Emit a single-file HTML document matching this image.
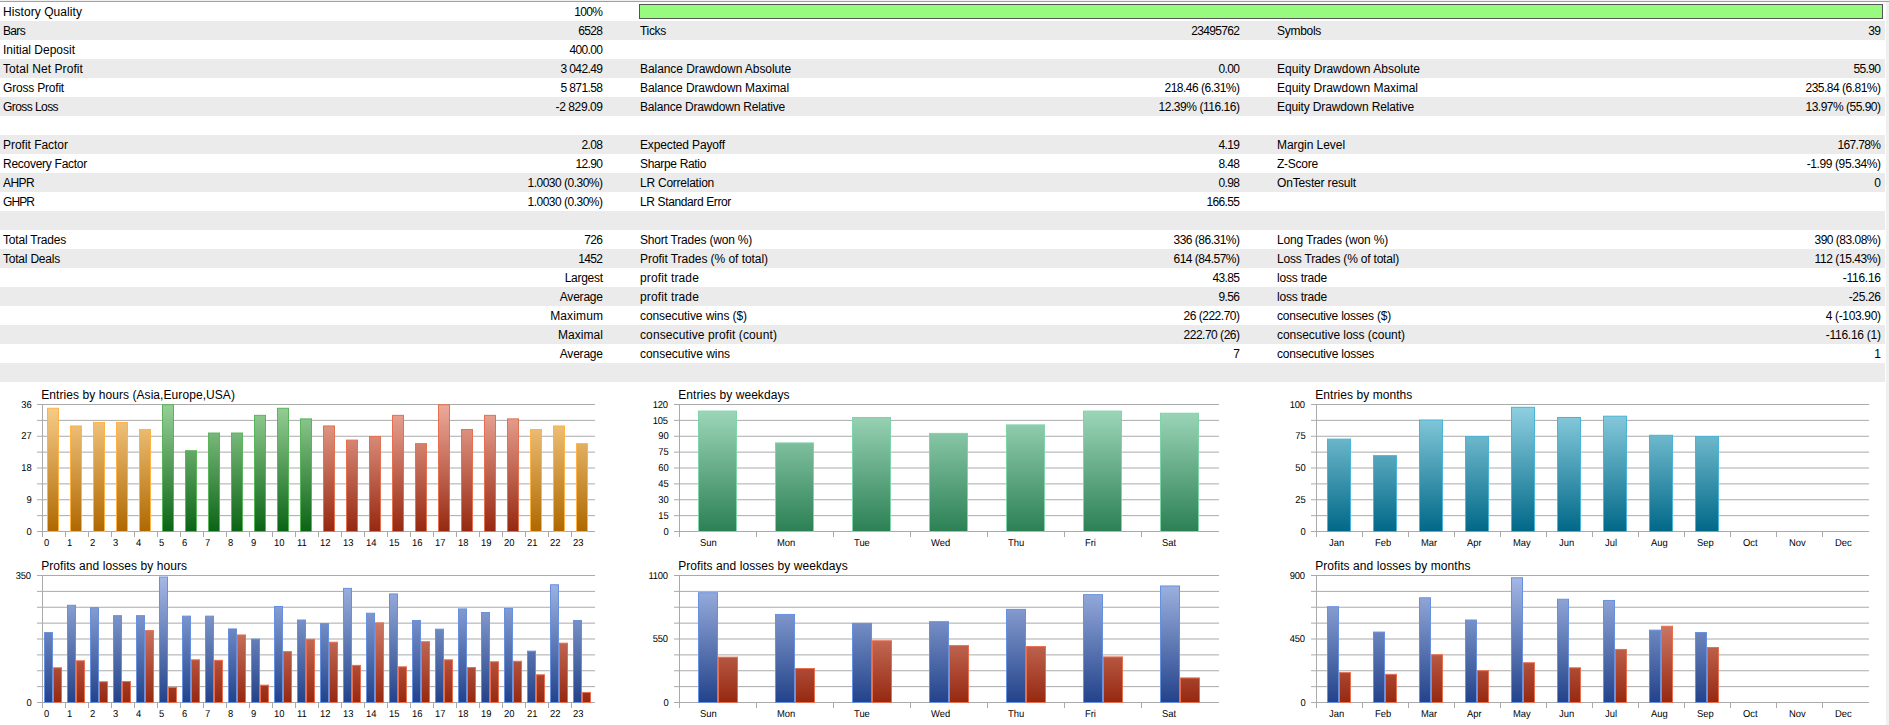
<!DOCTYPE html>
<html lang="en"><head><meta charset="utf-8"><title>Strategy Tester Report</title>
<style>
html,body{margin:0;padding:0;background:#fff;}
body{width:1889px;height:725px;position:relative;overflow:hidden;font-family:"Liberation Sans",Arial,sans-serif;font-size:12px;color:#000;}
.r{position:absolute;left:0;width:1885px;height:19px;line-height:19px;white-space:nowrap;}
.g{background:#ebebeb;}
.r span{position:absolute;top:1px;height:19px;}
.l1{left:3px;}
.v1{right:1282px;text-align:right;}
.l2{left:640px;}
.v2{right:645px;text-align:right;}
.l3{left:1277px;}
.v3{right:4px;text-align:right;}
svg{position:absolute;left:0;top:0;}
svg text{font-family:"Liberation Sans",Arial,sans-serif;fill:#000;}
.t{font-size:12px;letter-spacing:0.07px;}
.a{font-size:10px;text-rendering:geometricPrecision;}
</style></head><body>
<div style="position:absolute;left:0;top:0;width:1889px;height:1px;background:#f0f0f0"></div>
<div style="position:absolute;left:0;top:1px;width:1889px;height:1px;background:#a0a0a0"></div>
<div style="position:absolute;left:1886px;top:2px;width:3px;height:723px;background:#f0f0f0"></div>
<div class="r" style="top:2px">
<span class="l1" style="letter-spacing:0.065px;">History Quality</span>
<span class="v1" style="letter-spacing:-0.676px;margin-right:0.676px;">100%</span>
<span style="left:639px;top:2px;width:1242px;height:13px;border:1px solid #555;background:#98fb80"></span>
</div>
<div class="r g" style="top:21px">
<span class="l1" style="letter-spacing:-0.672px;">Bars</span>
<span class="v1" style="letter-spacing:-0.676px;margin-right:0.676px;">6528</span>
<span class="l2" style="letter-spacing:-0.312px;">Ticks</span>
<span class="v2" style="letter-spacing:-0.674px;margin-right:0.674px;">23495762</span>
<span class="l3" style="letter-spacing:-0.288px;">Symbols</span>
<span class="v3" style="letter-spacing:-0.680px;margin-right:0.680px;">39</span>
</div>
<div class="r" style="top:40px">
<span class="l1" style="letter-spacing:-0.003px;">Initial Deposit</span>
<span class="v1" style="letter-spacing:-0.617px;margin-right:0.617px;">400.00</span>
</div>
<div class="r g" style="top:59px">
<span class="l1" style="letter-spacing:0.081px;">Total Net Profit</span>
<span class="v1" style="letter-spacing:-0.590px;margin-right:0.590px;">3 042.49</span>
<span class="l2" style="letter-spacing:-0.071px;">Balance Drawdown Absolute</span>
<span class="v2" style="letter-spacing:-0.590px;margin-right:0.590px;">0.00</span>
<span class="l3" style="letter-spacing:0.010px;">Equity Drawdown Absolute</span>
<span class="v3" style="letter-spacing:-0.606px;margin-right:0.606px;">55.90</span>
</div>
<div class="r" style="top:78px">
<span class="l1" style="letter-spacing:-0.197px;">Gross Profit</span>
<span class="v1" style="letter-spacing:-0.590px;margin-right:0.590px;">5 871.58</span>
<span class="l2" style="letter-spacing:-0.100px;">Balance Drawdown Maximal</span>
<span class="v2" style="letter-spacing:-0.504px;margin-right:0.504px;">218.46 (6.31%)</span>
<span class="l3" style="letter-spacing:-0.017px;">Equity Drawdown Maximal</span>
<span class="v3" style="letter-spacing:-0.504px;margin-right:0.504px;">235.84 (6.81%)</span>
</div>
<div class="r g" style="top:97px">
<span class="l1" style="letter-spacing:-0.569px;">Gross Loss</span>
<span class="v1" style="letter-spacing:-0.413px;margin-right:0.413px;">-2 829.09</span>
<span class="l2" style="letter-spacing:-0.203px;">Balance Drawdown Relative</span>
<span class="v2" style="letter-spacing:-0.456px;margin-right:0.456px;">12.39% (116.16)</span>
<span class="l3" style="letter-spacing:-0.128px;">Equity Drawdown Relative</span>
<span class="v3" style="letter-spacing:-0.504px;margin-right:0.504px;">13.97% (55.90)</span>
</div>
<div class="r" style="top:116px">
</div>
<div class="r g" style="top:135px">
<span class="l1" style="letter-spacing:-0.028px;">Profit Factor</span>
<span class="v1" style="letter-spacing:-0.590px;margin-right:0.590px;">2.08</span>
<span class="l2" style="letter-spacing:-0.145px;">Expected Payoff</span>
<span class="v2" style="letter-spacing:-0.590px;margin-right:0.590px;">4.19</span>
<span class="l3" style="letter-spacing:-0.059px;">Margin Level</span>
<span class="v3" style="letter-spacing:-0.625px;margin-right:0.625px;">167.78%</span>
</div>
<div class="r" style="top:154px">
<span class="l1" style="letter-spacing:-0.269px;">Recovery Factor</span>
<span class="v1" style="letter-spacing:-0.606px;margin-right:0.606px;">12.90</span>
<span class="l2" style="letter-spacing:-0.337px;">Sharpe Ratio</span>
<span class="v2" style="letter-spacing:-0.590px;margin-right:0.590px;">8.48</span>
<span class="l3" style="letter-spacing:-0.241px;">Z-Score</span>
<span class="v3" style="letter-spacing:-0.385px;margin-right:0.385px;">-1.99 (95.34%)</span>
</div>
<div class="r g" style="top:173px">
<span class="l1" style="letter-spacing:-0.586px;">AHPR</span>
<span class="v1" style="letter-spacing:-0.504px;margin-right:0.504px;">1.0030 (0.30%)</span>
<span class="l2" style="letter-spacing:-0.241px;">LR Correlation</span>
<span class="v2" style="letter-spacing:-0.590px;margin-right:0.590px;">0.98</span>
<span class="l3" style="letter-spacing:-0.158px;">OnTester result</span>
<span class="v3" style="letter-spacing:-0.688px;margin-right:0.688px;">0</span>
</div>
<div class="r" style="top:192px">
<span class="l1" style="letter-spacing:-0.918px;">GHPR</span>
<span class="v1" style="letter-spacing:-0.504px;margin-right:0.504px;">1.0030 (0.30%)</span>
<span class="l2" style="letter-spacing:-0.376px;">LR Standard Error</span>
<span class="v2" style="letter-spacing:-0.617px;margin-right:0.617px;">166.55</span>
</div>
<div class="r g" style="top:211px">
</div>
<div class="r" style="top:230px">
<span class="l1" style="letter-spacing:-0.198px;">Total Trades</span>
<span class="v1" style="letter-spacing:-0.677px;margin-right:0.677px;">726</span>
<span class="l2" style="letter-spacing:-0.202px;">Short Trades (won %)</span>
<span class="v2" style="letter-spacing:-0.504px;margin-right:0.504px;">336 (86.31%)</span>
<span class="l3" style="letter-spacing:-0.161px;">Long Trades (won %)</span>
<span class="v3" style="letter-spacing:-0.504px;margin-right:0.504px;">390 (83.08%)</span>
</div>
<div class="r g" style="top:249px">
<span class="l1" style="letter-spacing:-0.216px;">Total Deals</span>
<span class="v1" style="letter-spacing:-0.676px;margin-right:0.676px;">1452</span>
<span class="l2" style="letter-spacing:-0.053px;">Profit Trades (% of total)</span>
<span class="v2" style="letter-spacing:-0.504px;margin-right:0.504px;">614 (84.57%)</span>
<span class="l3" style="letter-spacing:-0.197px;">Loss Trades (% of total)</span>
<span class="v3" style="letter-spacing:-0.430px;margin-right:0.430px;">112 (15.43%)</span>
</div>
<div class="r" style="top:268px">
<span class="v1" style="letter-spacing:-0.290px;margin-right:0.290px;">Largest</span>
<span class="l2" style="letter-spacing:0.135px;">profit trade</span>
<span class="v2" style="letter-spacing:-0.606px;margin-right:0.606px;">43.85</span>
<span class="l3" style="letter-spacing:-0.203px;">loss trade</span>
<span class="v3" style="letter-spacing:-0.259px;margin-right:0.259px;">-116.16</span>
</div>
<div class="r g" style="top:287px">
<span class="v1" style="letter-spacing:-0.212px;margin-right:0.212px;">Average</span>
<span class="l2" style="letter-spacing:0.135px;">profit trade</span>
<span class="v2" style="letter-spacing:-0.590px;margin-right:0.590px;">9.56</span>
<span class="l3" style="letter-spacing:-0.203px;">loss trade</span>
<span class="v3" style="letter-spacing:-0.339px;margin-right:0.339px;">-25.26</span>
</div>
<div class="r" style="top:306px">
<span class="v1" style="letter-spacing:0.141px;margin-right:-0.141px;">Maximum</span>
<span class="l2" style="letter-spacing:-0.086px;">consecutive wins ($)</span>
<span class="v2" style="letter-spacing:-0.490px;margin-right:0.490px;">26 (222.70)</span>
<span class="l3" style="letter-spacing:-0.214px;">consecutive losses ($)</span>
<span class="v3" style="letter-spacing:-0.337px;margin-right:0.337px;">4 (-103.90)</span>
</div>
<div class="r g" style="top:325px">
<span class="v1" style="letter-spacing:0.047px;margin-right:-0.047px;">Maximal</span>
<span class="l2" style="letter-spacing:0.113px;">consecutive profit (count)</span>
<span class="v2" style="letter-spacing:-0.490px;margin-right:0.490px;">222.70 (26)</span>
<span class="l3" style="letter-spacing:-0.031px;">consecutive loss (count)</span>
<span class="v3" style="letter-spacing:-0.256px;margin-right:0.256px;">-116.16 (1)</span>
</div>
<div class="r" style="top:344px">
<span class="v1" style="letter-spacing:-0.212px;margin-right:0.212px;">Average</span>
<span class="l2" style="letter-spacing:-0.045px;">consecutive wins</span>
<span class="v2" style="letter-spacing:-0.688px;margin-right:0.688px;">7</span>
<span class="l3" style="letter-spacing:-0.207px;">consecutive losses</span>
<span class="v3" style="letter-spacing:-0.688px;margin-right:0.688px;">1</span>
</div>
<div class="r g" style="top:363px">
</div>
<svg width="1889" height="725" viewBox="0 0 1889 725">
<defs>
<linearGradient id="or" gradientUnits="userSpaceOnUse" x1="0" y1="404.5" x2="0" y2="531.5"><stop offset="0" stop-color="#f8cf8c"/><stop offset="1" stop-color="#b06800"/></linearGradient>
<linearGradient id="gr" gradientUnits="userSpaceOnUse" x1="0" y1="404.5" x2="0" y2="531.5"><stop offset="0" stop-color="#98d098"/><stop offset="1" stop-color="#0a6414"/></linearGradient>
<linearGradient id="rd" gradientUnits="userSpaceOnUse" x1="0" y1="404.5" x2="0" y2="531.5"><stop offset="0" stop-color="#eeaa9a"/><stop offset="1" stop-color="#962810"/></linearGradient>
<linearGradient id="lg" gradientUnits="userSpaceOnUse" x1="0" y1="404.5" x2="0" y2="531.5"><stop offset="0" stop-color="#a2dabe"/><stop offset="1" stop-color="#2c8054"/></linearGradient>
<linearGradient id="tl" gradientUnits="userSpaceOnUse" x1="0" y1="404.5" x2="0" y2="531.5"><stop offset="0" stop-color="#92d2e2"/><stop offset="1" stop-color="#006888"/></linearGradient>
<linearGradient id="bl" gradientUnits="userSpaceOnUse" x1="0" y1="575.5" x2="0" y2="702.5"><stop offset="0" stop-color="#a6bae6"/><stop offset="1" stop-color="#22428a"/></linearGradient>
<linearGradient id="r2" gradientUnits="userSpaceOnUse" x1="0" y1="575.5" x2="0" y2="702.5"><stop offset="0" stop-color="#eeaa9a"/><stop offset="1" stop-color="#962810"/></linearGradient>
</defs>
<line x1="37" y1="404.500" x2="595" y2="404.500" stroke="#aaaaaa" stroke-width="1"/>
<line x1="37" y1="420.375" x2="595" y2="420.375" stroke="#aaaaaa" stroke-width="1"/>
<line x1="37" y1="436.250" x2="595" y2="436.250" stroke="#aaaaaa" stroke-width="1"/>
<line x1="37" y1="452.125" x2="595" y2="452.125" stroke="#aaaaaa" stroke-width="1"/>
<line x1="37" y1="468.000" x2="595" y2="468.000" stroke="#aaaaaa" stroke-width="1"/>
<line x1="37" y1="483.875" x2="595" y2="483.875" stroke="#aaaaaa" stroke-width="1"/>
<line x1="37" y1="499.750" x2="595" y2="499.750" stroke="#aaaaaa" stroke-width="1"/>
<line x1="37" y1="515.625" x2="595" y2="515.625" stroke="#aaaaaa" stroke-width="1"/>
<line x1="37" y1="531.500" x2="595" y2="531.500" stroke="#aaaaaa" stroke-width="1"/>
<line x1="42.5" y1="404.0" x2="42.5" y2="537.0" stroke="#aaaaaa" stroke-width="1"/>
<line x1="65.5" y1="531.5" x2="65.5" y2="537.0" stroke="#aaaaaa" stroke-width="1"/>
<line x1="88.5" y1="531.5" x2="88.5" y2="537.0" stroke="#aaaaaa" stroke-width="1"/>
<line x1="111.5" y1="531.5" x2="111.5" y2="537.0" stroke="#aaaaaa" stroke-width="1"/>
<line x1="134.5" y1="531.5" x2="134.5" y2="537.0" stroke="#aaaaaa" stroke-width="1"/>
<line x1="157.5" y1="531.5" x2="157.5" y2="537.0" stroke="#aaaaaa" stroke-width="1"/>
<line x1="180.5" y1="531.5" x2="180.5" y2="537.0" stroke="#aaaaaa" stroke-width="1"/>
<line x1="203.5" y1="531.5" x2="203.5" y2="537.0" stroke="#aaaaaa" stroke-width="1"/>
<line x1="226.5" y1="531.5" x2="226.5" y2="537.0" stroke="#aaaaaa" stroke-width="1"/>
<line x1="249.5" y1="531.5" x2="249.5" y2="537.0" stroke="#aaaaaa" stroke-width="1"/>
<line x1="272.5" y1="531.5" x2="272.5" y2="537.0" stroke="#aaaaaa" stroke-width="1"/>
<line x1="295.5" y1="531.5" x2="295.5" y2="537.0" stroke="#aaaaaa" stroke-width="1"/>
<line x1="318.5" y1="531.5" x2="318.5" y2="537.0" stroke="#aaaaaa" stroke-width="1"/>
<line x1="341.5" y1="531.5" x2="341.5" y2="537.0" stroke="#aaaaaa" stroke-width="1"/>
<line x1="364.5" y1="531.5" x2="364.5" y2="537.0" stroke="#aaaaaa" stroke-width="1"/>
<line x1="387.5" y1="531.5" x2="387.5" y2="537.0" stroke="#aaaaaa" stroke-width="1"/>
<line x1="410.5" y1="531.5" x2="410.5" y2="537.0" stroke="#aaaaaa" stroke-width="1"/>
<line x1="433.5" y1="531.5" x2="433.5" y2="537.0" stroke="#aaaaaa" stroke-width="1"/>
<line x1="456.5" y1="531.5" x2="456.5" y2="537.0" stroke="#aaaaaa" stroke-width="1"/>
<line x1="479.5" y1="531.5" x2="479.5" y2="537.0" stroke="#aaaaaa" stroke-width="1"/>
<line x1="502.5" y1="531.5" x2="502.5" y2="537.0" stroke="#aaaaaa" stroke-width="1"/>
<line x1="525.5" y1="531.5" x2="525.5" y2="537.0" stroke="#aaaaaa" stroke-width="1"/>
<line x1="548.5" y1="531.5" x2="548.5" y2="537.0" stroke="#aaaaaa" stroke-width="1"/>
<line x1="571.5" y1="531.5" x2="571.5" y2="537.0" stroke="#aaaaaa" stroke-width="1"/>
<text class="t" x="41.2" y="399.0">Entries by hours (Asia,Europe,USA)</text>
<text class="a" transform="translate(31.7,407.70) scale(0.94,1)" text-anchor="end">36</text>
<text class="a" transform="translate(31.7,439.45) scale(0.94,1)" text-anchor="end">27</text>
<text class="a" transform="translate(31.7,471.20) scale(0.94,1)" text-anchor="end">18</text>
<text class="a" transform="translate(31.7,502.95) scale(0.94,1)" text-anchor="end">9</text>
<text class="a" transform="translate(31.7,534.70) scale(0.94,1)" text-anchor="end">0</text>
<text class="a" transform="translate(44,546.0) scale(0.94,1)">0</text>
<text class="a" transform="translate(67,546.0) scale(0.94,1)">1</text>
<text class="a" transform="translate(90,546.0) scale(0.94,1)">2</text>
<text class="a" transform="translate(113,546.0) scale(0.94,1)">3</text>
<text class="a" transform="translate(136,546.0) scale(0.94,1)">4</text>
<text class="a" transform="translate(159,546.0) scale(0.94,1)">5</text>
<text class="a" transform="translate(182,546.0) scale(0.94,1)">6</text>
<text class="a" transform="translate(205,546.0) scale(0.94,1)">7</text>
<text class="a" transform="translate(228,546.0) scale(0.94,1)">8</text>
<text class="a" transform="translate(251,546.0) scale(0.94,1)">9</text>
<text class="a" transform="translate(274,546.0) scale(0.94,1)">10</text>
<text class="a" transform="translate(297,546.0) scale(0.94,1)">11</text>
<text class="a" transform="translate(320,546.0) scale(0.94,1)">12</text>
<text class="a" transform="translate(343,546.0) scale(0.94,1)">13</text>
<text class="a" transform="translate(366,546.0) scale(0.94,1)">14</text>
<text class="a" transform="translate(389,546.0) scale(0.94,1)">15</text>
<text class="a" transform="translate(412,546.0) scale(0.94,1)">16</text>
<text class="a" transform="translate(435,546.0) scale(0.94,1)">17</text>
<text class="a" transform="translate(458,546.0) scale(0.94,1)">18</text>
<text class="a" transform="translate(481,546.0) scale(0.94,1)">19</text>
<text class="a" transform="translate(504,546.0) scale(0.94,1)">20</text>
<text class="a" transform="translate(527,546.0) scale(0.94,1)">21</text>
<text class="a" transform="translate(550,546.0) scale(0.94,1)">22</text>
<text class="a" transform="translate(573,546.0) scale(0.94,1)">23</text>
<rect x="47.5" y="408.28" width="11" height="123.22" fill="url(#or)" stroke="#ffb347" stroke-width="1"/>
<rect x="70.5" y="425.96" width="11" height="105.54" fill="url(#or)" stroke="#ffb347" stroke-width="1"/>
<rect x="93.5" y="422.42" width="11" height="109.08" fill="url(#or)" stroke="#ffb347" stroke-width="1"/>
<rect x="116.5" y="422.42" width="11" height="109.08" fill="url(#or)" stroke="#ffb347" stroke-width="1"/>
<rect x="139.5" y="429.49" width="11" height="102.01" fill="url(#or)" stroke="#ffb347" stroke-width="1"/>
<rect x="162.5" y="404.75" width="11" height="126.75" fill="url(#gr)" stroke="#5ab45a" stroke-width="1"/>
<rect x="185.5" y="450.70" width="11" height="80.80" fill="url(#gr)" stroke="#5ab45a" stroke-width="1"/>
<rect x="208.5" y="433.03" width="11" height="98.47" fill="url(#gr)" stroke="#5ab45a" stroke-width="1"/>
<rect x="231.5" y="433.03" width="11" height="98.47" fill="url(#gr)" stroke="#5ab45a" stroke-width="1"/>
<rect x="254.5" y="415.35" width="11" height="116.15" fill="url(#gr)" stroke="#5ab45a" stroke-width="1"/>
<rect x="277.5" y="408.28" width="11" height="123.22" fill="url(#gr)" stroke="#5ab45a" stroke-width="1"/>
<rect x="300.5" y="418.89" width="11" height="112.61" fill="url(#gr)" stroke="#5ab45a" stroke-width="1"/>
<rect x="323.5" y="425.96" width="11" height="105.54" fill="url(#rd)" stroke="#e47050" stroke-width="1"/>
<rect x="346.5" y="440.10" width="11" height="91.40" fill="url(#rd)" stroke="#e47050" stroke-width="1"/>
<rect x="369.5" y="436.56" width="11" height="94.94" fill="url(#rd)" stroke="#e47050" stroke-width="1"/>
<rect x="392.5" y="415.35" width="11" height="116.15" fill="url(#rd)" stroke="#e47050" stroke-width="1"/>
<rect x="415.5" y="443.63" width="11" height="87.87" fill="url(#rd)" stroke="#e47050" stroke-width="1"/>
<rect x="438.5" y="404.75" width="11" height="126.75" fill="url(#rd)" stroke="#e47050" stroke-width="1"/>
<rect x="461.5" y="429.49" width="11" height="102.01" fill="url(#rd)" stroke="#e47050" stroke-width="1"/>
<rect x="484.5" y="415.35" width="11" height="116.15" fill="url(#rd)" stroke="#e47050" stroke-width="1"/>
<rect x="507.5" y="418.89" width="11" height="112.61" fill="url(#rd)" stroke="#e47050" stroke-width="1"/>
<rect x="530.5" y="429.49" width="11" height="102.01" fill="url(#or)" stroke="#ffb347" stroke-width="1"/>
<rect x="553.5" y="425.96" width="11" height="105.54" fill="url(#or)" stroke="#ffb347" stroke-width="1"/>
<rect x="576.5" y="443.63" width="11" height="87.87" fill="url(#or)" stroke="#ffb347" stroke-width="1"/>
<line x1="674" y1="404.500" x2="1219" y2="404.500" stroke="#aaaaaa" stroke-width="1"/>
<line x1="674" y1="420.375" x2="1219" y2="420.375" stroke="#aaaaaa" stroke-width="1"/>
<line x1="674" y1="436.250" x2="1219" y2="436.250" stroke="#aaaaaa" stroke-width="1"/>
<line x1="674" y1="452.125" x2="1219" y2="452.125" stroke="#aaaaaa" stroke-width="1"/>
<line x1="674" y1="468.000" x2="1219" y2="468.000" stroke="#aaaaaa" stroke-width="1"/>
<line x1="674" y1="483.875" x2="1219" y2="483.875" stroke="#aaaaaa" stroke-width="1"/>
<line x1="674" y1="499.750" x2="1219" y2="499.750" stroke="#aaaaaa" stroke-width="1"/>
<line x1="674" y1="515.625" x2="1219" y2="515.625" stroke="#aaaaaa" stroke-width="1"/>
<line x1="674" y1="531.500" x2="1219" y2="531.500" stroke="#aaaaaa" stroke-width="1"/>
<line x1="679.5" y1="404.0" x2="679.5" y2="537.0" stroke="#aaaaaa" stroke-width="1"/>
<line x1="756.5" y1="531.5" x2="756.5" y2="537.0" stroke="#aaaaaa" stroke-width="1"/>
<line x1="833.5" y1="531.5" x2="833.5" y2="537.0" stroke="#aaaaaa" stroke-width="1"/>
<line x1="910.5" y1="531.5" x2="910.5" y2="537.0" stroke="#aaaaaa" stroke-width="1"/>
<line x1="987.5" y1="531.5" x2="987.5" y2="537.0" stroke="#aaaaaa" stroke-width="1"/>
<line x1="1064.5" y1="531.5" x2="1064.5" y2="537.0" stroke="#aaaaaa" stroke-width="1"/>
<line x1="1141.5" y1="531.5" x2="1141.5" y2="537.0" stroke="#aaaaaa" stroke-width="1"/>
<text class="t" x="678.2" y="399.0">Entries by weekdays</text>
<text class="a" transform="translate(667.7,407.70) scale(0.94,1)" text-anchor="end" style="letter-spacing:-0.25px">120</text>
<text class="a" transform="translate(667.7,423.57) scale(0.94,1)" text-anchor="end" style="letter-spacing:-0.25px">105</text>
<text class="a" transform="translate(668.7,439.45) scale(0.94,1)" text-anchor="end">90</text>
<text class="a" transform="translate(668.7,455.32) scale(0.94,1)" text-anchor="end">75</text>
<text class="a" transform="translate(668.7,471.20) scale(0.94,1)" text-anchor="end">60</text>
<text class="a" transform="translate(668.7,487.07) scale(0.94,1)" text-anchor="end">45</text>
<text class="a" transform="translate(668.7,502.95) scale(0.94,1)" text-anchor="end">30</text>
<text class="a" transform="translate(668.7,518.83) scale(0.94,1)" text-anchor="end">15</text>
<text class="a" transform="translate(668.7,534.70) scale(0.94,1)" text-anchor="end">0</text>
<text class="a" transform="translate(700,546.0) scale(0.94,1)">Sun</text>
<text class="a" transform="translate(777,546.0) scale(0.94,1)">Mon</text>
<text class="a" transform="translate(854,546.0) scale(0.94,1)">Tue</text>
<text class="a" transform="translate(931,546.0) scale(0.94,1)">Wed</text>
<text class="a" transform="translate(1008,546.0) scale(0.94,1)">Thu</text>
<text class="a" transform="translate(1085,546.0) scale(0.94,1)">Fri</text>
<text class="a" transform="translate(1162,546.0) scale(0.94,1)">Sat</text>
<rect x="698.5" y="411.11" width="38" height="120.39" fill="url(#lg)" stroke="#80d4a8" stroke-width="1"/>
<rect x="775.5" y="442.93" width="38" height="88.57" fill="url(#lg)" stroke="#80d4a8" stroke-width="1"/>
<rect x="852.5" y="417.48" width="38" height="114.02" fill="url(#lg)" stroke="#80d4a8" stroke-width="1"/>
<rect x="929.5" y="433.38" width="38" height="98.12" fill="url(#lg)" stroke="#80d4a8" stroke-width="1"/>
<rect x="1006.5" y="424.90" width="38" height="106.60" fill="url(#lg)" stroke="#80d4a8" stroke-width="1"/>
<rect x="1083.5" y="411.11" width="38" height="120.39" fill="url(#lg)" stroke="#80d4a8" stroke-width="1"/>
<rect x="1160.5" y="413.23" width="38" height="118.27" fill="url(#lg)" stroke="#80d4a8" stroke-width="1"/>
<line x1="1311" y1="404.500" x2="1869" y2="404.500" stroke="#aaaaaa" stroke-width="1"/>
<line x1="1311" y1="420.375" x2="1869" y2="420.375" stroke="#aaaaaa" stroke-width="1"/>
<line x1="1311" y1="436.250" x2="1869" y2="436.250" stroke="#aaaaaa" stroke-width="1"/>
<line x1="1311" y1="452.125" x2="1869" y2="452.125" stroke="#aaaaaa" stroke-width="1"/>
<line x1="1311" y1="468.000" x2="1869" y2="468.000" stroke="#aaaaaa" stroke-width="1"/>
<line x1="1311" y1="483.875" x2="1869" y2="483.875" stroke="#aaaaaa" stroke-width="1"/>
<line x1="1311" y1="499.750" x2="1869" y2="499.750" stroke="#aaaaaa" stroke-width="1"/>
<line x1="1311" y1="515.625" x2="1869" y2="515.625" stroke="#aaaaaa" stroke-width="1"/>
<line x1="1311" y1="531.500" x2="1869" y2="531.500" stroke="#aaaaaa" stroke-width="1"/>
<line x1="1316.5" y1="404.0" x2="1316.5" y2="537.0" stroke="#aaaaaa" stroke-width="1"/>
<line x1="1362.5" y1="531.5" x2="1362.5" y2="537.0" stroke="#aaaaaa" stroke-width="1"/>
<line x1="1408.5" y1="531.5" x2="1408.5" y2="537.0" stroke="#aaaaaa" stroke-width="1"/>
<line x1="1454.5" y1="531.5" x2="1454.5" y2="537.0" stroke="#aaaaaa" stroke-width="1"/>
<line x1="1500.5" y1="531.5" x2="1500.5" y2="537.0" stroke="#aaaaaa" stroke-width="1"/>
<line x1="1546.5" y1="531.5" x2="1546.5" y2="537.0" stroke="#aaaaaa" stroke-width="1"/>
<line x1="1592.5" y1="531.5" x2="1592.5" y2="537.0" stroke="#aaaaaa" stroke-width="1"/>
<line x1="1638.5" y1="531.5" x2="1638.5" y2="537.0" stroke="#aaaaaa" stroke-width="1"/>
<line x1="1684.5" y1="531.5" x2="1684.5" y2="537.0" stroke="#aaaaaa" stroke-width="1"/>
<line x1="1730.5" y1="531.5" x2="1730.5" y2="537.0" stroke="#aaaaaa" stroke-width="1"/>
<line x1="1776.5" y1="531.5" x2="1776.5" y2="537.0" stroke="#aaaaaa" stroke-width="1"/>
<line x1="1822.5" y1="531.5" x2="1822.5" y2="537.0" stroke="#aaaaaa" stroke-width="1"/>
<text class="t" x="1315.2" y="399.0">Entries by months</text>
<text class="a" transform="translate(1304.7,407.70) scale(0.94,1)" text-anchor="end" style="letter-spacing:-0.25px">100</text>
<text class="a" transform="translate(1305.7,439.45) scale(0.94,1)" text-anchor="end">75</text>
<text class="a" transform="translate(1305.7,471.20) scale(0.94,1)" text-anchor="end">50</text>
<text class="a" transform="translate(1305.7,502.95) scale(0.94,1)" text-anchor="end">25</text>
<text class="a" transform="translate(1305.7,534.70) scale(0.94,1)" text-anchor="end">0</text>
<text class="a" transform="translate(1329,546.0) scale(0.94,1)">Jan</text>
<text class="a" transform="translate(1375,546.0) scale(0.94,1)">Feb</text>
<text class="a" transform="translate(1421,546.0) scale(0.94,1)">Mar</text>
<text class="a" transform="translate(1467,546.0) scale(0.94,1)">Apr</text>
<text class="a" transform="translate(1513,546.0) scale(0.94,1)">May</text>
<text class="a" transform="translate(1559,546.0) scale(0.94,1)">Jun</text>
<text class="a" transform="translate(1605,546.0) scale(0.94,1)">Jul</text>
<text class="a" transform="translate(1651,546.0) scale(0.94,1)">Aug</text>
<text class="a" transform="translate(1697,546.0) scale(0.94,1)">Sep</text>
<text class="a" transform="translate(1743,546.0) scale(0.94,1)">Oct</text>
<text class="a" transform="translate(1789,546.0) scale(0.94,1)">Nov</text>
<text class="a" transform="translate(1835,546.0) scale(0.94,1)">Dec</text>
<rect x="1327.5" y="439.11" width="23" height="92.39" fill="url(#tl)" stroke="#48b4d8" stroke-width="1"/>
<rect x="1373.5" y="455.65" width="23" height="75.85" fill="url(#tl)" stroke="#48b4d8" stroke-width="1"/>
<rect x="1419.5" y="420.02" width="23" height="111.48" fill="url(#tl)" stroke="#48b4d8" stroke-width="1"/>
<rect x="1465.5" y="436.56" width="23" height="94.94" fill="url(#tl)" stroke="#48b4d8" stroke-width="1"/>
<rect x="1511.5" y="407.30" width="23" height="124.20" fill="url(#tl)" stroke="#48b4d8" stroke-width="1"/>
<rect x="1557.5" y="417.48" width="23" height="114.02" fill="url(#tl)" stroke="#48b4d8" stroke-width="1"/>
<rect x="1603.5" y="416.20" width="23" height="115.30" fill="url(#tl)" stroke="#48b4d8" stroke-width="1"/>
<rect x="1649.5" y="435.29" width="23" height="96.21" fill="url(#tl)" stroke="#48b4d8" stroke-width="1"/>
<rect x="1695.5" y="436.56" width="23" height="94.94" fill="url(#tl)" stroke="#48b4d8" stroke-width="1"/>
<line x1="37" y1="575.500" x2="595" y2="575.500" stroke="#aaaaaa" stroke-width="1"/>
<line x1="37" y1="591.375" x2="595" y2="591.375" stroke="#aaaaaa" stroke-width="1"/>
<line x1="37" y1="607.250" x2="595" y2="607.250" stroke="#aaaaaa" stroke-width="1"/>
<line x1="37" y1="623.125" x2="595" y2="623.125" stroke="#aaaaaa" stroke-width="1"/>
<line x1="37" y1="639.000" x2="595" y2="639.000" stroke="#aaaaaa" stroke-width="1"/>
<line x1="37" y1="654.875" x2="595" y2="654.875" stroke="#aaaaaa" stroke-width="1"/>
<line x1="37" y1="670.750" x2="595" y2="670.750" stroke="#aaaaaa" stroke-width="1"/>
<line x1="37" y1="686.625" x2="595" y2="686.625" stroke="#aaaaaa" stroke-width="1"/>
<line x1="37" y1="702.500" x2="595" y2="702.500" stroke="#aaaaaa" stroke-width="1"/>
<line x1="42.5" y1="575.0" x2="42.5" y2="708.0" stroke="#aaaaaa" stroke-width="1"/>
<line x1="65.5" y1="702.5" x2="65.5" y2="708.0" stroke="#aaaaaa" stroke-width="1"/>
<line x1="88.5" y1="702.5" x2="88.5" y2="708.0" stroke="#aaaaaa" stroke-width="1"/>
<line x1="111.5" y1="702.5" x2="111.5" y2="708.0" stroke="#aaaaaa" stroke-width="1"/>
<line x1="134.5" y1="702.5" x2="134.5" y2="708.0" stroke="#aaaaaa" stroke-width="1"/>
<line x1="157.5" y1="702.5" x2="157.5" y2="708.0" stroke="#aaaaaa" stroke-width="1"/>
<line x1="180.5" y1="702.5" x2="180.5" y2="708.0" stroke="#aaaaaa" stroke-width="1"/>
<line x1="203.5" y1="702.5" x2="203.5" y2="708.0" stroke="#aaaaaa" stroke-width="1"/>
<line x1="226.5" y1="702.5" x2="226.5" y2="708.0" stroke="#aaaaaa" stroke-width="1"/>
<line x1="249.5" y1="702.5" x2="249.5" y2="708.0" stroke="#aaaaaa" stroke-width="1"/>
<line x1="272.5" y1="702.5" x2="272.5" y2="708.0" stroke="#aaaaaa" stroke-width="1"/>
<line x1="295.5" y1="702.5" x2="295.5" y2="708.0" stroke="#aaaaaa" stroke-width="1"/>
<line x1="318.5" y1="702.5" x2="318.5" y2="708.0" stroke="#aaaaaa" stroke-width="1"/>
<line x1="341.5" y1="702.5" x2="341.5" y2="708.0" stroke="#aaaaaa" stroke-width="1"/>
<line x1="364.5" y1="702.5" x2="364.5" y2="708.0" stroke="#aaaaaa" stroke-width="1"/>
<line x1="387.5" y1="702.5" x2="387.5" y2="708.0" stroke="#aaaaaa" stroke-width="1"/>
<line x1="410.5" y1="702.5" x2="410.5" y2="708.0" stroke="#aaaaaa" stroke-width="1"/>
<line x1="433.5" y1="702.5" x2="433.5" y2="708.0" stroke="#aaaaaa" stroke-width="1"/>
<line x1="456.5" y1="702.5" x2="456.5" y2="708.0" stroke="#aaaaaa" stroke-width="1"/>
<line x1="479.5" y1="702.5" x2="479.5" y2="708.0" stroke="#aaaaaa" stroke-width="1"/>
<line x1="502.5" y1="702.5" x2="502.5" y2="708.0" stroke="#aaaaaa" stroke-width="1"/>
<line x1="525.5" y1="702.5" x2="525.5" y2="708.0" stroke="#aaaaaa" stroke-width="1"/>
<line x1="548.5" y1="702.5" x2="548.5" y2="708.0" stroke="#aaaaaa" stroke-width="1"/>
<line x1="571.5" y1="702.5" x2="571.5" y2="708.0" stroke="#aaaaaa" stroke-width="1"/>
<text class="t" x="41.2" y="570.0">Profits and losses by hours</text>
<text class="a" transform="translate(30.7,578.70) scale(0.94,1)" text-anchor="end" style="letter-spacing:-0.25px">350</text>
<text class="a" transform="translate(31.7,705.70) scale(0.94,1)" text-anchor="end">0</text>
<text class="a" transform="translate(44,717.0) scale(0.94,1)">0</text>
<text class="a" transform="translate(67,717.0) scale(0.94,1)">1</text>
<text class="a" transform="translate(90,717.0) scale(0.94,1)">2</text>
<text class="a" transform="translate(113,717.0) scale(0.94,1)">3</text>
<text class="a" transform="translate(136,717.0) scale(0.94,1)">4</text>
<text class="a" transform="translate(159,717.0) scale(0.94,1)">5</text>
<text class="a" transform="translate(182,717.0) scale(0.94,1)">6</text>
<text class="a" transform="translate(205,717.0) scale(0.94,1)">7</text>
<text class="a" transform="translate(228,717.0) scale(0.94,1)">8</text>
<text class="a" transform="translate(251,717.0) scale(0.94,1)">9</text>
<text class="a" transform="translate(274,717.0) scale(0.94,1)">10</text>
<text class="a" transform="translate(297,717.0) scale(0.94,1)">11</text>
<text class="a" transform="translate(320,717.0) scale(0.94,1)">12</text>
<text class="a" transform="translate(343,717.0) scale(0.94,1)">13</text>
<text class="a" transform="translate(366,717.0) scale(0.94,1)">14</text>
<text class="a" transform="translate(389,717.0) scale(0.94,1)">15</text>
<text class="a" transform="translate(412,717.0) scale(0.94,1)">16</text>
<text class="a" transform="translate(435,717.0) scale(0.94,1)">17</text>
<text class="a" transform="translate(458,717.0) scale(0.94,1)">18</text>
<text class="a" transform="translate(481,717.0) scale(0.94,1)">19</text>
<text class="a" transform="translate(504,717.0) scale(0.94,1)">20</text>
<text class="a" transform="translate(527,717.0) scale(0.94,1)">21</text>
<text class="a" transform="translate(550,717.0) scale(0.94,1)">22</text>
<text class="a" transform="translate(573,717.0) scale(0.94,1)">23</text>
<rect x="44.5" y="632.55" width="8" height="69.95" fill="url(#bl)" stroke="#6890e0" stroke-width="1"/>
<rect x="53.5" y="667.79" width="8" height="34.71" fill="url(#r2)" stroke="#e87050" stroke-width="1"/>
<rect x="67.5" y="605.28" width="8" height="97.22" fill="url(#bl)" stroke="#6890e0" stroke-width="1"/>
<rect x="76.5" y="660.79" width="8" height="41.71" fill="url(#r2)" stroke="#e87050" stroke-width="1"/>
<rect x="90.5" y="607.69" width="8" height="94.81" fill="url(#bl)" stroke="#6890e0" stroke-width="1"/>
<rect x="99.5" y="681.78" width="8" height="20.72" fill="url(#r2)" stroke="#e87050" stroke-width="1"/>
<rect x="113.5" y="615.66" width="8" height="86.84" fill="url(#bl)" stroke="#6890e0" stroke-width="1"/>
<rect x="122.5" y="681.54" width="8" height="20.96" fill="url(#r2)" stroke="#e87050" stroke-width="1"/>
<rect x="136.5" y="615.66" width="8" height="86.84" fill="url(#bl)" stroke="#6890e0" stroke-width="1"/>
<rect x="145.5" y="630.62" width="8" height="71.88" fill="url(#r2)" stroke="#e87050" stroke-width="1"/>
<rect x="159.5" y="577.05" width="8" height="125.45" fill="url(#bl)" stroke="#6890e0" stroke-width="1"/>
<rect x="168.5" y="687.33" width="8" height="15.17" fill="url(#r2)" stroke="#e87050" stroke-width="1"/>
<rect x="182.5" y="616.14" width="8" height="86.36" fill="url(#bl)" stroke="#6890e0" stroke-width="1"/>
<rect x="191.5" y="659.82" width="8" height="42.68" fill="url(#r2)" stroke="#e87050" stroke-width="1"/>
<rect x="205.5" y="616.14" width="8" height="86.36" fill="url(#bl)" stroke="#6890e0" stroke-width="1"/>
<rect x="214.5" y="660.30" width="8" height="42.20" fill="url(#r2)" stroke="#e87050" stroke-width="1"/>
<rect x="228.5" y="628.93" width="8" height="73.57" fill="url(#bl)" stroke="#6890e0" stroke-width="1"/>
<rect x="237.5" y="634.96" width="8" height="67.54" fill="url(#r2)" stroke="#e87050" stroke-width="1"/>
<rect x="251.5" y="639.07" width="8" height="63.43" fill="url(#bl)" stroke="#6890e0" stroke-width="1"/>
<rect x="260.5" y="685.16" width="8" height="17.34" fill="url(#r2)" stroke="#e87050" stroke-width="1"/>
<rect x="274.5" y="606.49" width="8" height="96.01" fill="url(#bl)" stroke="#6890e0" stroke-width="1"/>
<rect x="283.5" y="651.62" width="8" height="50.88" fill="url(#r2)" stroke="#e87050" stroke-width="1"/>
<rect x="297.5" y="620.00" width="8" height="82.50" fill="url(#bl)" stroke="#6890e0" stroke-width="1"/>
<rect x="306.5" y="639.31" width="8" height="63.19" fill="url(#r2)" stroke="#e87050" stroke-width="1"/>
<rect x="320.5" y="623.62" width="8" height="78.88" fill="url(#bl)" stroke="#6890e0" stroke-width="1"/>
<rect x="329.5" y="642.20" width="8" height="60.30" fill="url(#r2)" stroke="#e87050" stroke-width="1"/>
<rect x="343.5" y="588.39" width="8" height="114.11" fill="url(#bl)" stroke="#6890e0" stroke-width="1"/>
<rect x="352.5" y="665.37" width="8" height="37.13" fill="url(#r2)" stroke="#e87050" stroke-width="1"/>
<rect x="366.5" y="613.25" width="8" height="89.25" fill="url(#bl)" stroke="#6890e0" stroke-width="1"/>
<rect x="375.5" y="622.90" width="8" height="79.60" fill="url(#r2)" stroke="#e87050" stroke-width="1"/>
<rect x="389.5" y="593.94" width="8" height="108.56" fill="url(#bl)" stroke="#6890e0" stroke-width="1"/>
<rect x="398.5" y="666.82" width="8" height="35.68" fill="url(#r2)" stroke="#e87050" stroke-width="1"/>
<rect x="412.5" y="620.48" width="8" height="82.02" fill="url(#bl)" stroke="#6890e0" stroke-width="1"/>
<rect x="421.5" y="641.72" width="8" height="60.78" fill="url(#r2)" stroke="#e87050" stroke-width="1"/>
<rect x="435.5" y="629.17" width="8" height="73.33" fill="url(#bl)" stroke="#6890e0" stroke-width="1"/>
<rect x="444.5" y="659.82" width="8" height="42.68" fill="url(#r2)" stroke="#e87050" stroke-width="1"/>
<rect x="458.5" y="608.90" width="8" height="93.60" fill="url(#bl)" stroke="#6890e0" stroke-width="1"/>
<rect x="467.5" y="667.54" width="8" height="34.96" fill="url(#r2)" stroke="#e87050" stroke-width="1"/>
<rect x="481.5" y="612.52" width="8" height="89.98" fill="url(#bl)" stroke="#6890e0" stroke-width="1"/>
<rect x="490.5" y="661.75" width="8" height="40.75" fill="url(#r2)" stroke="#e87050" stroke-width="1"/>
<rect x="504.5" y="608.42" width="8" height="94.08" fill="url(#bl)" stroke="#6890e0" stroke-width="1"/>
<rect x="513.5" y="661.27" width="8" height="41.23" fill="url(#r2)" stroke="#e87050" stroke-width="1"/>
<rect x="527.5" y="651.13" width="8" height="51.37" fill="url(#bl)" stroke="#6890e0" stroke-width="1"/>
<rect x="536.5" y="674.78" width="8" height="27.72" fill="url(#r2)" stroke="#e87050" stroke-width="1"/>
<rect x="550.5" y="584.77" width="8" height="117.73" fill="url(#bl)" stroke="#6890e0" stroke-width="1"/>
<rect x="559.5" y="643.17" width="8" height="59.33" fill="url(#r2)" stroke="#e87050" stroke-width="1"/>
<rect x="573.5" y="620.48" width="8" height="82.02" fill="url(#bl)" stroke="#6890e0" stroke-width="1"/>
<rect x="582.5" y="692.40" width="8" height="10.10" fill="url(#r2)" stroke="#e87050" stroke-width="1"/>
<line x1="674" y1="575.500" x2="1219" y2="575.500" stroke="#aaaaaa" stroke-width="1"/>
<line x1="674" y1="591.375" x2="1219" y2="591.375" stroke="#aaaaaa" stroke-width="1"/>
<line x1="674" y1="607.250" x2="1219" y2="607.250" stroke="#aaaaaa" stroke-width="1"/>
<line x1="674" y1="623.125" x2="1219" y2="623.125" stroke="#aaaaaa" stroke-width="1"/>
<line x1="674" y1="639.000" x2="1219" y2="639.000" stroke="#aaaaaa" stroke-width="1"/>
<line x1="674" y1="654.875" x2="1219" y2="654.875" stroke="#aaaaaa" stroke-width="1"/>
<line x1="674" y1="670.750" x2="1219" y2="670.750" stroke="#aaaaaa" stroke-width="1"/>
<line x1="674" y1="686.625" x2="1219" y2="686.625" stroke="#aaaaaa" stroke-width="1"/>
<line x1="674" y1="702.500" x2="1219" y2="702.500" stroke="#aaaaaa" stroke-width="1"/>
<line x1="679.5" y1="575.0" x2="679.5" y2="708.0" stroke="#aaaaaa" stroke-width="1"/>
<line x1="756.5" y1="702.5" x2="756.5" y2="708.0" stroke="#aaaaaa" stroke-width="1"/>
<line x1="833.5" y1="702.5" x2="833.5" y2="708.0" stroke="#aaaaaa" stroke-width="1"/>
<line x1="910.5" y1="702.5" x2="910.5" y2="708.0" stroke="#aaaaaa" stroke-width="1"/>
<line x1="987.5" y1="702.5" x2="987.5" y2="708.0" stroke="#aaaaaa" stroke-width="1"/>
<line x1="1064.5" y1="702.5" x2="1064.5" y2="708.0" stroke="#aaaaaa" stroke-width="1"/>
<line x1="1141.5" y1="702.5" x2="1141.5" y2="708.0" stroke="#aaaaaa" stroke-width="1"/>
<text class="t" x="678.2" y="570.0">Profits and losses by weekdays</text>
<text class="a" transform="translate(667.7,578.70) scale(0.94,1)" text-anchor="end" style="letter-spacing:-0.25px">1100</text>
<text class="a" transform="translate(667.7,642.20) scale(0.94,1)" text-anchor="end" style="letter-spacing:-0.25px">550</text>
<text class="a" transform="translate(668.7,705.70) scale(0.94,1)" text-anchor="end">0</text>
<text class="a" transform="translate(700,717.0) scale(0.94,1)">Sun</text>
<text class="a" transform="translate(777,717.0) scale(0.94,1)">Mon</text>
<text class="a" transform="translate(854,717.0) scale(0.94,1)">Tue</text>
<text class="a" transform="translate(931,717.0) scale(0.94,1)">Wed</text>
<text class="a" transform="translate(1008,717.0) scale(0.94,1)">Thu</text>
<text class="a" transform="translate(1085,717.0) scale(0.94,1)">Fri</text>
<text class="a" transform="translate(1162,717.0) scale(0.94,1)">Sat</text>
<rect x="698.5" y="592.73" width="19" height="109.77" fill="url(#bl)" stroke="#6890e0" stroke-width="1"/>
<rect x="718.5" y="657.17" width="19" height="45.33" fill="url(#r2)" stroke="#e87050" stroke-width="1"/>
<rect x="775.5" y="614.45" width="19" height="88.05" fill="url(#bl)" stroke="#6890e0" stroke-width="1"/>
<rect x="795.5" y="668.51" width="19" height="33.99" fill="url(#r2)" stroke="#e87050" stroke-width="1"/>
<rect x="852.5" y="623.38" width="19" height="79.12" fill="url(#bl)" stroke="#6890e0" stroke-width="1"/>
<rect x="872.5" y="640.76" width="19" height="61.74" fill="url(#r2)" stroke="#e87050" stroke-width="1"/>
<rect x="929.5" y="621.69" width="19" height="80.81" fill="url(#bl)" stroke="#6890e0" stroke-width="1"/>
<rect x="949.5" y="645.58" width="19" height="56.92" fill="url(#r2)" stroke="#e87050" stroke-width="1"/>
<rect x="1006.5" y="609.38" width="19" height="93.12" fill="url(#bl)" stroke="#6890e0" stroke-width="1"/>
<rect x="1026.5" y="646.55" width="19" height="55.95" fill="url(#r2)" stroke="#e87050" stroke-width="1"/>
<rect x="1083.5" y="594.66" width="19" height="107.84" fill="url(#bl)" stroke="#6890e0" stroke-width="1"/>
<rect x="1103.5" y="656.93" width="19" height="45.57" fill="url(#r2)" stroke="#e87050" stroke-width="1"/>
<rect x="1160.5" y="585.98" width="19" height="116.52" fill="url(#bl)" stroke="#6890e0" stroke-width="1"/>
<rect x="1180.5" y="677.92" width="19" height="24.58" fill="url(#r2)" stroke="#e87050" stroke-width="1"/>
<line x1="1311" y1="575.500" x2="1869" y2="575.500" stroke="#aaaaaa" stroke-width="1"/>
<line x1="1311" y1="591.375" x2="1869" y2="591.375" stroke="#aaaaaa" stroke-width="1"/>
<line x1="1311" y1="607.250" x2="1869" y2="607.250" stroke="#aaaaaa" stroke-width="1"/>
<line x1="1311" y1="623.125" x2="1869" y2="623.125" stroke="#aaaaaa" stroke-width="1"/>
<line x1="1311" y1="639.000" x2="1869" y2="639.000" stroke="#aaaaaa" stroke-width="1"/>
<line x1="1311" y1="654.875" x2="1869" y2="654.875" stroke="#aaaaaa" stroke-width="1"/>
<line x1="1311" y1="670.750" x2="1869" y2="670.750" stroke="#aaaaaa" stroke-width="1"/>
<line x1="1311" y1="686.625" x2="1869" y2="686.625" stroke="#aaaaaa" stroke-width="1"/>
<line x1="1311" y1="702.500" x2="1869" y2="702.500" stroke="#aaaaaa" stroke-width="1"/>
<line x1="1316.5" y1="575.0" x2="1316.5" y2="708.0" stroke="#aaaaaa" stroke-width="1"/>
<line x1="1362.5" y1="702.5" x2="1362.5" y2="708.0" stroke="#aaaaaa" stroke-width="1"/>
<line x1="1408.5" y1="702.5" x2="1408.5" y2="708.0" stroke="#aaaaaa" stroke-width="1"/>
<line x1="1454.5" y1="702.5" x2="1454.5" y2="708.0" stroke="#aaaaaa" stroke-width="1"/>
<line x1="1500.5" y1="702.5" x2="1500.5" y2="708.0" stroke="#aaaaaa" stroke-width="1"/>
<line x1="1546.5" y1="702.5" x2="1546.5" y2="708.0" stroke="#aaaaaa" stroke-width="1"/>
<line x1="1592.5" y1="702.5" x2="1592.5" y2="708.0" stroke="#aaaaaa" stroke-width="1"/>
<line x1="1638.5" y1="702.5" x2="1638.5" y2="708.0" stroke="#aaaaaa" stroke-width="1"/>
<line x1="1684.5" y1="702.5" x2="1684.5" y2="708.0" stroke="#aaaaaa" stroke-width="1"/>
<line x1="1730.5" y1="702.5" x2="1730.5" y2="708.0" stroke="#aaaaaa" stroke-width="1"/>
<line x1="1776.5" y1="702.5" x2="1776.5" y2="708.0" stroke="#aaaaaa" stroke-width="1"/>
<line x1="1822.5" y1="702.5" x2="1822.5" y2="708.0" stroke="#aaaaaa" stroke-width="1"/>
<text class="t" x="1315.2" y="570.0">Profits and losses by months</text>
<text class="a" transform="translate(1304.7,578.70) scale(0.94,1)" text-anchor="end" style="letter-spacing:-0.25px">900</text>
<text class="a" transform="translate(1304.7,642.20) scale(0.94,1)" text-anchor="end" style="letter-spacing:-0.25px">450</text>
<text class="a" transform="translate(1305.7,705.70) scale(0.94,1)" text-anchor="end">0</text>
<text class="a" transform="translate(1329,717.0) scale(0.94,1)">Jan</text>
<text class="a" transform="translate(1375,717.0) scale(0.94,1)">Feb</text>
<text class="a" transform="translate(1421,717.0) scale(0.94,1)">Mar</text>
<text class="a" transform="translate(1467,717.0) scale(0.94,1)">Apr</text>
<text class="a" transform="translate(1513,717.0) scale(0.94,1)">May</text>
<text class="a" transform="translate(1559,717.0) scale(0.94,1)">Jun</text>
<text class="a" transform="translate(1605,717.0) scale(0.94,1)">Jul</text>
<text class="a" transform="translate(1651,717.0) scale(0.94,1)">Aug</text>
<text class="a" transform="translate(1697,717.0) scale(0.94,1)">Sep</text>
<text class="a" transform="translate(1743,717.0) scale(0.94,1)">Oct</text>
<text class="a" transform="translate(1789,717.0) scale(0.94,1)">Nov</text>
<text class="a" transform="translate(1835,717.0) scale(0.94,1)">Dec</text>
<rect x="1327.5" y="606.73" width="11" height="95.77" fill="url(#bl)" stroke="#6890e0" stroke-width="1"/>
<rect x="1339.5" y="672.61" width="11" height="29.89" fill="url(#r2)" stroke="#e87050" stroke-width="1"/>
<rect x="1373.5" y="632.07" width="11" height="70.43" fill="url(#bl)" stroke="#6890e0" stroke-width="1"/>
<rect x="1385.5" y="674.30" width="11" height="28.20" fill="url(#r2)" stroke="#e87050" stroke-width="1"/>
<rect x="1419.5" y="597.80" width="11" height="104.70" fill="url(#bl)" stroke="#6890e0" stroke-width="1"/>
<rect x="1431.5" y="654.75" width="11" height="47.75" fill="url(#r2)" stroke="#e87050" stroke-width="1"/>
<rect x="1465.5" y="620.00" width="11" height="82.50" fill="url(#bl)" stroke="#6890e0" stroke-width="1"/>
<rect x="1477.5" y="670.68" width="11" height="31.82" fill="url(#r2)" stroke="#e87050" stroke-width="1"/>
<rect x="1511.5" y="577.77" width="11" height="124.73" fill="url(#bl)" stroke="#6890e0" stroke-width="1"/>
<rect x="1523.5" y="662.72" width="11" height="39.78" fill="url(#r2)" stroke="#e87050" stroke-width="1"/>
<rect x="1557.5" y="599.25" width="11" height="103.25" fill="url(#bl)" stroke="#6890e0" stroke-width="1"/>
<rect x="1569.5" y="667.79" width="11" height="34.71" fill="url(#r2)" stroke="#e87050" stroke-width="1"/>
<rect x="1603.5" y="600.45" width="11" height="102.05" fill="url(#bl)" stroke="#6890e0" stroke-width="1"/>
<rect x="1615.5" y="649.44" width="11" height="53.06" fill="url(#r2)" stroke="#e87050" stroke-width="1"/>
<rect x="1649.5" y="630.14" width="11" height="72.36" fill="url(#bl)" stroke="#6890e0" stroke-width="1"/>
<rect x="1661.5" y="626.28" width="11" height="76.22" fill="url(#r2)" stroke="#e87050" stroke-width="1"/>
<rect x="1695.5" y="632.55" width="11" height="69.95" fill="url(#bl)" stroke="#6890e0" stroke-width="1"/>
<rect x="1707.5" y="647.51" width="11" height="54.99" fill="url(#r2)" stroke="#e87050" stroke-width="1"/>
</svg>
</body></html>
